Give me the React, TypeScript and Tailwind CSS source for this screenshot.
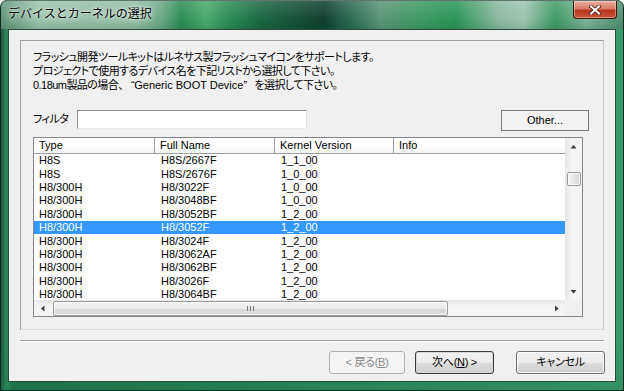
import React from "react";

const rows: [string, string, string][] = [
  ["H8S", "H8S/2667F", "1_1_00"],
  ["H8S", "H8S/2676F", "1_0_00"],
  ["H8/300H", "H8/3022F", "1_0_00"],
  ["H8/300H", "H8/3048BF", "1_0_00"],
  ["H8/300H", "H8/3052BF", "1_2_00"],
  ["H8/300H", "H8/3052F", "1_2_00"],
  ["H8/300H", "H8/3024F", "1_2_00"],
  ["H8/300H", "H8/3062AF", "1_2_00"],
  ["H8/300H", "H8/3062BF", "1_2_00"],
  ["H8/300H", "H8/3026F", "1_2_00"],
  ["H8/300H", "H8/3064BF", "1_2_00"],
];

function Arrow({ dir }: { dir: "up" | "down" | "left" | "right" }) {
  const pts: Record<string, string> = {
    up: "0.5,4.5 3.5,1 6.5,4.5",
    down: "0.5,1 3.5,4.5 6.5,1",
    left: "4.5,0.5 1,3.5 4.5,6.5",
    right: "1,0.5 4.5,3.5 1,6.5",
  };
  const vert = dir === "up" || dir === "down";
  return (
    <svg width={vert ? 7 : 5} height={vert ? 5 : 7} viewBox={vert ? "0 0 7 5" : "0 0 5 7"}>
      <polygon points={pts[dir]} fill="#3c3c3c" />
    </svg>
  );
}

export default function App() {
  const jp = "font-['Liberation_Sans','Noto_Sans_CJK_JP',sans-serif] [font-feature-settings:'palt']";
  const lat = "font-['Liberation_Sans',Arial,sans-serif]";
  return (
    <div className="w-[624px] h-[391px] overflow-hidden rounded-t-[7px] flex flex-col px-[8px] pb-[9px] shadow-[inset_0_0_0_1px_#0f2a22] [background:linear-gradient(180deg,rgba(0,0,0,0)_0%,rgba(0,0,0,0)_85%,rgba(30,120,80,0.3)_100%),linear-gradient(90deg,#1b4a36_0%,#2f8a5c_1%,#1e6e48_2%,#3b9a6a_100%)]">
      {/* Title bar */}
      <div className="-mx-[8px] px-[8px] h-[29px] flex justify-between items-start rounded-t-[7px] shadow-[inset_0_1px_0_rgba(255,255,255,0.35),inset_1px_0_0_#0f2a22,inset_-1px_0_0_#0f2a22,inset_0_1px_0_#0f2a22] [background:linear-gradient(180deg,rgba(255,255,255,0.15)_0px,rgba(255,255,255,0)_20px,rgba(0,40,20,0.12)_29px),linear-gradient(90deg,#5f9378_0%,#9ac1ab_6%,#93bca4_22%,#6aa886_26%,#2c8c55_29%,#49a96d_33%,#2a8a56_37%,#1a6642_42%,#10402f_52%,#2a6a52_56%,#5a9578_61%,#3a9a62_68%,#2b9458_73%,#8cbaa2_80%,#9fc4b0_84%,#3e9a66_89%,#7db39a_94%,#4f8e70_100%)]">
        <div className={`mt-[4px] text-[12px] leading-[18px] text-black font-['Noto_Sans_CJK_JP',sans-serif] [text-shadow:0_0_6px_rgba(255,255,255,0.95),0_0_2px_rgba(255,255,255,0.9)]`}>
          デバイスとカーネルの選択
        </div>
        <div className="w-[44px] h-[18px] mt-[1px] -mr-[1px] rounded-b-[4px] border border-t-0 border-[#3d140e] flex items-center justify-center [background:linear-gradient(180deg,#eab0a2_0%,#d77a64_45%,#b8351c_55%,#c9553a_100%)] shadow-[inset_0_0_0_1px_rgba(255,220,210,0.45)]">
          <svg width="12" height="10" viewBox="0 0 12 10">
            <path d="M2 1.5 L10 8.5 M10 1.5 L2 8.5" stroke="#4a1a12" strokeWidth="3.6" strokeLinecap="square" />
            <path d="M2 1.5 L10 8.5 M10 1.5 L2 8.5" stroke="#ffffff" strokeWidth="2" strokeLinecap="square" />
          </svg>
        </div>
      </div>

      {/* Client area */}
      <div className="flex-1 bg-[#f0f0f0] border border-[#2a4a3a] flex flex-col">
        {/* Page panel */}
        <div className="ml-[11px] mt-[10px] w-[584px] h-[290px] border border-[#a0a0a0] border-r-[#c8c8c8] border-b-[#d8d8d8] pl-[12px] pr-[14px] pt-[9px] flex flex-col">
          <div className={`${jp} text-[11px] leading-[14px] text-black tracking-[-0.55px]`}>
            <div>フラッシュ開発ツールキットはルネサス製フラッシュマイコンをサポートします。</div>
            <div>プロジェクトで使用するデバイス名を下記リストから選択して下さい。</div>
            <div>
              0.18um製品の場合、<span className="inline-block w-[11px] text-right">“</span>
              <span className="tracking-normal">Generic BOOT Device</span>
              <span className="inline-block w-[11px] text-left">”</span>を選択して下さい。
            </div>
          </div>

          {/* Filter row */}
          <div className="mt-[18px] h-[21px] flex items-start">
            <div className={`${jp} w-[44px] text-[11px] leading-[19px] text-black tracking-[-0.5px]`}>フィルタ</div>
            <div className="w-[230px] h-[19px] bg-white border border-[#8e8f8f] border-b-[#e3e9ef] border-r-[#dbdfe6]" />
            <div className={`ml-auto w-[88px] h-[21px] border border-[#7a7a7a] bg-[#f2f2f2] flex items-center justify-center ${lat} text-[11px] text-black`}>
              Other...
            </div>
          </div>

          {/* List view */}
          <div className="mt-[6px] w-[550px] h-[180px] border border-[#828790] bg-white grid grid-cols-[531px_17px] grid-rows-[162px_16px]">
            {/* main */}
            <div className="overflow-hidden flex flex-col">
              <div className={`h-[16px] shrink-0 flex border-b border-[#a0a0a0] bg-[linear-gradient(180deg,#ffffff_0%,#ffffff_60%,#f3f4f6_100%)] ${lat} text-[11px] leading-[15px] text-black`}>
                <div className="w-[121px] pl-[5px] border-r border-[#a0a0a0]">Type</div>
                <div className="w-[120px] pl-[5px] border-r border-[#a0a0a0]">Full Name</div>
                <div className="w-[119px] pl-[5px] border-r border-[#a0a0a0]">Kernel Version</div>
                <div className="flex-1 pl-[5px]">Info</div>
              </div>
              <div className={`${lat} text-[11px] text-black`}>
                {rows.map((r, i) => (
                  <div
                    key={i}
                    className={`h-[13.4px] flex items-center ${i === 5 ? "bg-[#3399ff] text-white" : ""}`}
                  >
                    <div className="w-[121px] pl-[5px] leading-[13px]">{r[0]}</div>
                    <div className="w-[120px] pl-[6px] leading-[13px]">{r[1]}</div>
                    <div className="w-[119px] pl-[6px] leading-[13px]">{r[2]}</div>
                  </div>
                ))}
              </div>
            </div>
            {/* vertical scrollbar */}
            <div className="bg-[linear-gradient(90deg,#e6e6e6_0%,#f4f4f4_40%,#f4f4f4_100%)] flex flex-col">
              <div className="h-[17px] flex items-center justify-center">
                <Arrow dir="up" />
              </div>
              <div className="flex-1">
                <div className="ml-[2px] mt-[17px] w-[14px] h-[14px] rounded-[2px] border border-[#9b9b9b] bg-[linear-gradient(90deg,#f4f4f4_0%,#e6e6e6_50%,#d6d6d6_100%)] shadow-[inset_0_0_0_1px_rgba(255,255,255,0.7)]" />
              </div>
              <div className="h-[17px] flex items-center justify-center">
                <Arrow dir="down" />
              </div>
            </div>
            {/* horizontal scrollbar */}
            <div className="bg-[linear-gradient(180deg,#e6e6e6_0%,#f4f4f4_40%,#f4f4f4_100%)] flex items-center">
              <div className="w-[17px] h-full flex items-center justify-center">
                <Arrow dir="left" />
              </div>
              <div className="ml-[2px] w-[395px] h-[15px] rounded-[2px] border border-[#9b9b9b] bg-[linear-gradient(180deg,#f5f5f5_0%,#e9e9e9_50%,#d8d8d8_51%,#dcdcdc_100%)] shadow-[inset_0_0_0_1px_rgba(255,255,255,0.7)] flex items-center justify-center gap-[2px]">
                <div className="w-[1px] h-[5px] bg-[#7a7a7a]" />
                <div className="w-[1px] h-[5px] bg-[#7a7a7a]" />
                <div className="w-[1px] h-[5px] bg-[#7a7a7a]" />
              </div>
              <div className="flex-1" />
              <div className="w-[17px] h-full flex items-center justify-center">
                <Arrow dir="right" />
              </div>
            </div>
            <div className="bg-[#f0f0f0]" />
          </div>
        </div>

        {/* Separator */}
        <div className="ml-[11px] mt-[10px] w-[584px] h-[2px] border-t border-[#a0a0a0] border-b border-b-white" />

        {/* Buttons */}
        <div className={`mt-[9px] flex justify-end pr-[10px] ${jp} text-[11px] leading-[21px] tracking-[-0.3px]`}>
          <div className="w-[76px] h-[23px] rounded-[3px] border border-[#adb2b5] bg-[#f4f4f4] text-[#8a8a8a] flex items-center justify-center">
            &lt; 戻る(<span className="underline">B</span>)
          </div>
          <div className="ml-[10px] w-[79px] h-[23px] rounded-[3px] border border-[#3c3c3c] shadow-[inset_0_0_0_1px_#d8d8d8] bg-[linear-gradient(180deg,#f2f2f2_0%,#ebebeb_50%,#dddddd_51%,#cfcfcf_100%)] text-black flex items-center justify-center">
            次へ(<span className="underline">N</span>) &gt;
          </div>
          <div className="ml-[22px] w-[89px] h-[23px] rounded-[3px] border border-[#707070] shadow-[inset_0_0_0_1px_rgba(255,255,255,0.8)] bg-[linear-gradient(180deg,#f2f2f2_0%,#ebebeb_50%,#dddddd_51%,#cfcfcf_100%)] text-black flex items-center justify-center">
            キャンセル
          </div>
        </div>
      </div>
    </div>
  );
}
